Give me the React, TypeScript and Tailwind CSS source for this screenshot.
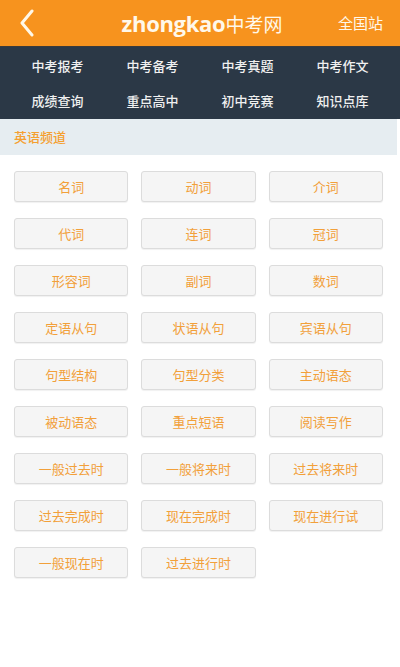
import React from "react";

const nav = ["中考报考", "中考备考", "中考真题", "中考作文", "成绩查询", "重点高中", "初中竞赛", "知识点库"];
const items = [
  "名词", "动词", "介词",
  "代词", "连词", "冠词",
  "形容词", "副词", "数词",
  "定语从句", "状语从句", "宾语从句",
  "句型结构", "句型分类", "主动语态",
  "被动语态", "重点短语", "阅读写作",
  "一般过去时", "一般将来时", "过去将来时",
  "过去完成时", "现在完成时", "现在进行试",
  "一般现在时", "过去进行时",
];

const font = { fontFamily: '"Noto Sans CJK SC", "Open Sans", sans-serif' };

export default function App() {
  return (
    <div className="w-[400px] h-[667px] bg-white overflow-hidden" style={font}>
      <div className="h-[46px] bg-[#f7931e] flex items-center justify-between px-[18px]">
        <svg width="18" height="28" viewBox="0 0 18 28" className="shrink-0">
          <path d="M14 2 L4 14 L14 26" fill="none" stroke="#fff8e8" strokeWidth="3" strokeLinecap="round" strokeLinejoin="round" />
        </svg>
        <div className="flex items-baseline text-[#fff8ea] ml-[30px]">
          <span className="text-[22px] font-bold tracking-[-0.3px]" style={{ fontFamily: '"Open Sans", sans-serif' }}>zhongkao</span>
          <span className="text-[19px]">中考网</span>
        </div>
        <span className="text-[15px] text-[#fff8ea] mr-[-1px]">全国站</span>
      </div>
      <div className="h-[73px] bg-[#2b3846] border-t border-[#3a3a3a] grid grid-cols-4 px-[10px] py-[1px]">
        {nav.map((n) => (
          <div key={n} className="flex items-center justify-center text-[13px] font-medium text-[#f0f0f0]">{n}</div>
        ))}
      </div>
      <div className="h-[36px] bg-[#e6edf1] flex items-center px-[14px] text-[13px] font-medium text-[#f5a030] mr-[3px]">英语频道</div>
      <div className="grid grid-cols-3 gap-x-[13px] gap-y-[16px] px-[14px] pt-[16px] w-[397px]">
        {items.map((t) => (
          <div key={t} className="h-[31px] rounded-[3px] border border-[#dcdcdc] bg-[#f5f5f5] shadow-[0_1px_1px_rgba(0,0,0,0.06)] flex items-center justify-center text-[13px] text-[#f2a03a]">
            {t}
          </div>
        ))}
      </div>
    </div>
  );
}
